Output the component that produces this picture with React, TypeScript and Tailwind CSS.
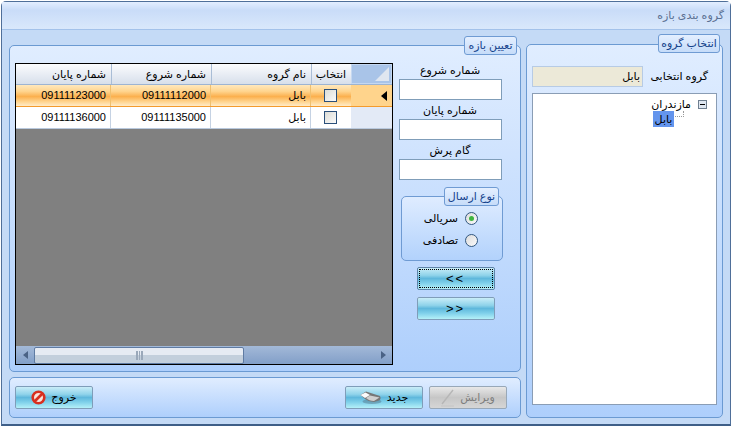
import type { ReactNode } from "react";

const font = "[font-family:'Liberation_Sans','DejaVu_Sans',sans-serif]";

const btnBlue =
  "bg-[linear-gradient(to_bottom,#c9edf8_0%,#8fd3ea_35%,#5fb8dc_50%,#7fd0ea_72%,#b4f0f8_100%)]";

function Legend({ text, className }: { text: string; className: string }) {
  return (
    <div
      dir="rtl"
      className={`absolute flex h-[19px] items-center justify-center rounded-[3px] border border-[#6f9bd3] bg-[linear-gradient(to_bottom,#e4efff,#c6dcf9)] text-[11px] text-[#15428b] ${className}`}
    >
      {text}
    </div>
  );
}

function Field({ label }: { label: string }) {
  return (
    <div className="flex flex-col items-center">
      <div dir="rtl" className="flex h-[19px] items-center pt-[1px] text-[11px] text-black">
        {label}
      </div>
      <div className="h-[21px] w-[103px] border border-[#7f9db9] bg-white" />
    </div>
  );
}

function Radio({ label, on }: { label: string; on?: boolean }) {
  return (
    <div className="flex h-[22px] items-center justify-end gap-[7px]">
      <span dir="rtl" className="text-[11px] text-black">
        {label}
      </span>
      <span className="flex h-[13px] w-[13px] items-center justify-center rounded-full border border-[#33587f] bg-[linear-gradient(135deg,#dcdcdc,#fafafa)]">
        {on && <span className="h-[5px] w-[5px] rounded-full bg-[#3fb53f]" />}
      </span>
    </div>
  );
}

function ActionButton({
  children,
  disabled,
  focused,
}: {
  children: ReactNode;
  disabled?: boolean;
  focused?: boolean;
}) {
  return (
    <div
      dir="rtl"
      className={`relative flex h-[23px] w-[78px] items-center justify-center gap-[5px] rounded-[2px] border text-[11px] ${
        disabled
          ? "border-[#98a8b8] bg-[linear-gradient(to_bottom,#e8e8e8,#c6c6c6_50%,#d6d6d6)] text-[#7d7d7d]"
          : focused
            ? `border-[#5f84a8] text-black ${btnBlue}`
            : `border-[#e8f4fb] text-black outline outline-1 outline-[#7f9db9] -outline-offset-1 ${btnBlue}`
      }`}
    >
      {focused && <span className="absolute inset-[1px] border border-dotted border-black" />}
      {children}
    </div>
  );
}

function EraserIcon() {
  return (
    <svg width="22" height="13" viewBox="0 0 22 13">
      <ellipse cx="12" cy="10.5" rx="9.5" ry="2.5" fill="#4f6f82" opacity="0.45" />
      <path d="M0.5 4 L6 0.5 L20 5 Q21.5 8 19 9.5 L14 11 Q9 11 5 8 Z" fill="#777" />
      <path d="M0.5 4 L5.5 1.5 L10 4 L5 7 Z" fill="#fbfbfb" />
      <path d="M6 7 L10 4.5 L19.5 6.5 L14 10 Q9 10 6 7 Z" fill="#cfcfcf" />
    </svg>
  );
}

function PencilIcon() {
  return (
    <svg width="14" height="18" viewBox="0 0 14 18" fill="none">
      <path d="M1 15 L12 1" stroke="#b6b6b6" strokeWidth="1.4" />
      <path d="M0 17 L13 17" stroke="#c4c4c4" />
    </svg>
  );
}

function ForbidIcon() {
  return (
    <svg width="15" height="15" viewBox="0 0 15 15" fill="none">
      <circle cx="7.5" cy="7.5" r="5.8" fill="#fbe3dc" stroke="#d8301f" strokeWidth="2.6" />
      <path d="M3.5 11.5 L11.5 3.5" stroke="#d8301f" strokeWidth="2.6" />
    </svg>
  );
}

function CheckBox() {
  return (
    <span className="h-[13px] w-[13px] border border-[#2a4f7a] bg-[linear-gradient(135deg,#dcdcd6,#fafafa)]" />
  );
}

const headerCell =
  "flex items-center justify-start border-l border-[#a9bdd6] pr-[5px] text-[11px] text-black";

function Row({ start, end, active }: { start: string; end: string; active?: boolean }) {
  const cell = `flex items-center justify-end border-r pr-[4px] text-[11px] text-black ${
    active ? "border-[#f0c070]" : "border-[#c5d2e3]"
  }`;
  return (
    <div
      className={`flex h-[22px] border-b ${
        active
          ? "border-[#f49b2c] bg-[linear-gradient(to_bottom,#ffe8bd_0%,#ffd58f_30%,#fbb04e_55%,#ffd590_80%,#ffebc8_100%)]"
          : "border-[#b9c9dd] bg-white"
      }`}
    >
      <div className={`${cell} w-[95px]`}>{end}</div>
      <div className={`${cell} w-[100px]`}>{start}</div>
      <div dir="rtl" className={`${cell} w-[100px] !justify-start`}>
        بابل
      </div>
      <div className="flex w-[40px] items-center justify-center pr-[2px]">
        <CheckBox />
      </div>
      <div
        className={`flex w-[41px] items-center justify-end pr-[5px] ${
          active ? "bg-[#ffd48c]" : "bg-[#e3eaf6]"
        }`}
      >
        {active && <span className="h-0 w-0 border-y-[5px] border-r-[6px] border-y-transparent border-r-black" />}
      </div>
    </div>
  );
}

function Grid() {
  return (
    <div className="flex h-[302px] w-[378px] flex-col border border-black bg-[#808080]">
      <div className="flex h-[21px] border-b border-[#9db4d2] bg-[linear-gradient(to_bottom,#fbfcfe,#d7dfeb)]">
        <div className={`${headerCell} w-[95px] !border-l-0`} dir="rtl">
          شماره پایان
        </div>
        <div className={`${headerCell} w-[100px]`} dir="rtl">
          شماره شروع
        </div>
        <div className={`${headerCell} w-[100px]`} dir="rtl">
          نام گروه
        </div>
        <div className={`${headerCell} w-[40px]`} dir="rtl">
          انتخاب
        </div>
        <div className="flex w-[41px] items-end justify-end border border-[#c5d8f1] bg-[#a9c4e8] p-[2px]">
          <span className="h-0 w-0 border-b-[14px] border-l-[14px] border-b-[#dfe6f0] border-l-transparent" />
        </div>
      </div>
      <Row start="09111112000" end="09111123000" active />
      <Row start="09111135000" end="09111136000" />
      <div className="flex-1" />
      <div className="flex h-[18px] items-center bg-[linear-gradient(to_bottom,#a3b9d8,#829fc8)]">
        <div className="flex w-[18px] justify-center">
          <span className="h-0 w-0 border-y-[4px] border-r-[5px] border-y-transparent border-r-[#4a6285]" />
        </div>
        <div className="flex h-[17px] w-[210px] items-center justify-center rounded-[2px] border border-[#5f7ba3] bg-[linear-gradient(to_bottom,#e6ebf3_50%,#c3cfdc_50%)]">
          <span className="h-[9px] w-[7px] border-x border-[#9aa8ba] bg-[repeating-linear-gradient(to_right,#9aa8ba_0,#9aa8ba_1px,transparent_1px,transparent_2px)]" />
        </div>
        <div className="flex-1" />
        <div className="flex w-[18px] justify-center">
          <span className="h-0 w-0 border-y-[4px] border-l-[5px] border-y-transparent border-l-[#4a6285]" />
        </div>
      </div>
    </div>
  );
}

function Panel({ className, children }: { className: string; children?: ReactNode }) {
  return (
    <div
      className={`relative rounded-[5px] border border-[#6b9ad2] bg-[linear-gradient(to_bottom,#e0edff,#aecffc)] ${className}`}
    >
      {children}
    </div>
  );
}

export default function App() {
  return (
    <div className={`h-[427px] w-[732px] overflow-hidden bg-white ${font}`}>
      <div className="ml-px mt-px flex h-[425px] w-[730px] flex-col rounded-t-[5px] border border-[#4f6f99] border-b-2 border-b-[#3f5f88] bg-[#c4daf6]">
        <div
          dir="rtl"
          className="flex h-[28px] shrink-0 items-center border-b border-[#a3c2ea] bg-[linear-gradient(to_bottom,#e3eeff,#c9dcf8_30%,#d9e8fb)] pr-[6px] text-[11px] text-[#5a6f92]"
        >
          گروه بندی بازه
        </div>
        <div className="flex gap-[5px] pl-[7px] pt-[14px]">
          <div className="flex w-[512px] flex-col gap-[5px] pt-px">
            <Panel className="flex h-[327px] gap-[3px] pl-[5px] pt-[17px]">
              <Legend text="تعیین بازه" className="-top-[10px] right-[3px] w-[53px]" />
              <Grid />
              <div className="-mt-[3px] flex w-[108px] flex-col items-center">
                <Field label="شماره شروع" />
                <Field label="شماره پایان" />
                <Field label="گام پرش" />
                <div className="relative mt-[16px] ml-[4px] flex h-[65px] w-[102px] flex-col rounded-[5px] border border-[#6f9bd3] bg-[linear-gradient(to_bottom,#dfecff,#b2d2fc)] pr-[24px] pt-[10px]">
                  <Legend text="نوع ارسال" className="-top-[10px] right-[3px] w-[55px]" />
                  <Radio label="سریالی" on />
                  <Radio label="تصادفی" />
                </div>
                <div className="mt-[6px] ml-[11px] flex flex-col gap-[7px]">
                  <ActionButton focused>
                    <span dir="ltr" className="text-[13px] tracking-[2px]">
                      {"<<"}
                    </span>
                  </ActionButton>
                  <ActionButton>
                    <span dir="ltr" className="text-[13px] tracking-[2px]">
                      {">>"}
                    </span>
                  </ActionButton>
                </div>
              </div>
            </Panel>
            <Panel className="flex h-[41px] items-center justify-between pl-[5px] pr-[13px]">
              <ActionButton>
                خروج
                <ForbidIcon />
              </ActionButton>
              <div className="flex gap-[6px]">
                <ActionButton>
                  جدید
                  <EraserIcon />
                </ActionButton>
                <ActionButton disabled>
                  ویرایش
                  <PencilIcon />
                </ActionButton>
              </div>
            </Panel>
          </div>
          <Panel className="flex h-[374px] w-[197px] flex-col px-[5px] pt-[21px]">
            <Legend text="انتخاب گروه" className="-top-[11px] right-[2px] w-[62px]" />
            <div className="flex h-[21px] items-center">
              <div
                dir="rtl"
                className="flex h-[21px] w-[111px] items-center border border-[#b7cbe5] bg-[#ece9d8] pr-[2px] text-[11px] text-black"
              >
                بابل
              </div>
              <div dir="rtl" className="flex-1 pr-[9px] text-[11px] text-black">
                گروه انتخابی
              </div>
            </div>
            <div className="mt-[6px] h-[312px] w-[185px] border border-[#8a9db5] bg-white pt-[4px]">
              <div className="flex h-[12px] items-center">
                <span dir="rtl" className="ml-[122px] w-[36px] text-[11px] text-black">
                  مازندران
                </span>
                <span className="ml-[7px] flex h-[9px] w-[9px] items-center justify-center border border-[#6f7f90] bg-[#dfe7f1]">
                  <span className="h-px w-[5px] bg-black" />
                </span>
              </div>
              <div className="mt-[1px] flex items-start">
                <span
                  dir="rtl"
                  className="ml-[120px] flex h-[16px] w-[21px] items-center justify-center bg-[#6495ed] text-[11px] text-black"
                >
                  بابل
                </span>
                <span className="ml-px h-[6px] w-[9px] border-b border-r border-dotted border-[#9a9a9a]" />
              </div>
            </div>
          </Panel>
        </div>
      </div>
    </div>
  );
}
